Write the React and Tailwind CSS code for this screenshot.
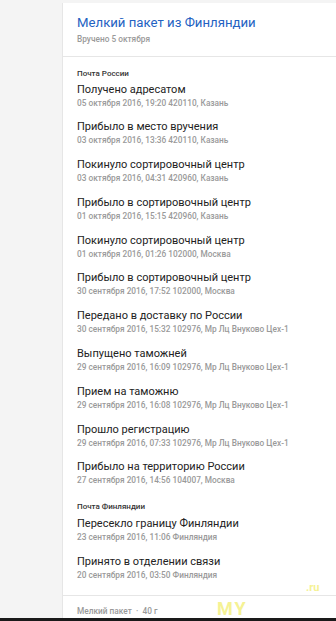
import React from "react";

const ru = [
  ["Получено адресатом", "05 октября 2016, 19:20 420110, Казань"],
  ["Прибыло в место вручения", "03 октября 2016, 13:36 420110, Казань"],
  ["Покинуло сортировочный центр", "03 октября 2016, 04:31 420960, Казань"],
  ["Прибыло в сортировочный центр", "01 октября 2016, 15:15 420960, Казань"],
  ["Покинуло сортировочный центр", "01 октября 2016, 01:26 102000, Москва"],
  ["Прибыло в сортировочный центр", "30 сентября 2016, 17:52 102000, Москва"],
  ["Передано в доставку по России", "30 сентября 2016, 15:32 102976, Мр Лц Внуково Цех-1"],
  ["Выпущено таможней", "29 сентября 2016, 16:09 102976, Мр Лц Внуково Цех-1"],
  ["Прием на таможню", "29 сентября 2016, 16:08 102976, Мр Лц Внуково Цех-1"],
  ["Прошло регистрацию", "29 сентября 2016, 07:33 102976, Мр Лц Внуково Цех-1"],
  ["Прибыло на территорию России", "27 сентября 2016, 14:56 104007, Москва"],
];

const fi = [
  ["Пересекло границу Финляндии", "23 сентября 2016, 11:06 Финляндия"],
  ["Принято в отделении связи", "20 сентября 2016, 03:50 Финляндия"],
];

function Item({ t, d }) {
  return (
    <div className="pb-[10.8px]">
      <div className="text-[11px] leading-[15px] text-[#222]">{t}</div>
      <div className="text-[8.3px] leading-[12px] text-[#9a9a9a] font-medium">{d}</div>
    </div>
  );
}

export default function App() {
  return (
    <div
      className="relative h-[621px] w-[336px] overflow-hidden bg-[#f4f4f4] flex flex-col"
      style={{ fontFamily: "Roboto, 'Noto Sans', sans-serif" }}
    >
      <div className="flex-1 flex pt-[3px] min-h-0">
        <div className="w-[62px] shrink-0" />
        <div className="flex-1 bg-white border-l border-[#e6e6e6] flex flex-col">
          <div className="pl-[14px] pt-[10.5px] pb-[11.5px] border-b border-[#e6e6e6]">
            <div className="text-[13.2px] leading-[17px] text-[#2462c2]">Мелкий пакет из Финляндии</div>
            <div className="mt-[2px] text-[8.3px] leading-[12px] text-[#9a9a9a] font-medium">Вручено 5 октября</div>
          </div>
          <div className="pl-[14px] pt-[10.5px] flex-1">
            <div className="text-[8px] leading-[11px] text-[#333] font-medium mb-[3px]">Почта России</div>
            {ru.map(([t, d], i) => (
              <Item key={i} t={t} d={d} />
            ))}
            <div className="mt-[4.2px] text-[8px] leading-[11px] text-[#333] font-medium mb-[4px]">Почта Финляндии</div>
            {fi.map(([t, d], i) => (
              <Item key={i} t={t} d={d} />
            ))}
          </div>
          <div className="border-t border-[#e6e6e6] pl-[14px] pt-[9px] pb-[1px] text-[8.3px] leading-[12px] text-[#9a9a9a] font-medium">
            Мелкий пакет &nbsp;·&nbsp; 40 г
          </div>
        </div>
      </div>
      <div className="h-[3px] bg-[#1a1a1a] shrink-0" />
      <div className="absolute left-[217px] top-[600px] text-[18px] leading-[18px] font-bold text-[#f3ef7a] opacity-80 tracking-[2px]">
        MY
      </div>
      <div className="absolute left-[306px] top-[582px] text-[11px] leading-[12px] font-bold text-[#f3ef7a] opacity-80">
        .ru
      </div>
    </div>
  );
}
